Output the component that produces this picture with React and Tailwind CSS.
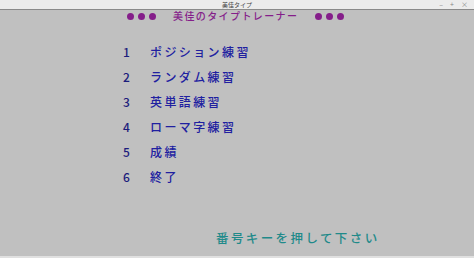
export default function App() {
  const items = [
    ['1', 'ポジション練習'],
    ['2', 'ランダム練習'],
    ['3', '英単語練習'],
    ['4', 'ローマ字練習'],
    ['5', '成績'],
    ['6', '終了'],
  ];
  const font = { fontFamily: '"Noto Sans CJK JP", "Noto Sans", sans-serif' };
  const Dots = () => (
    <div className="flex gap-[4px]">
      <span className="h-[7px] w-[7px] rounded-full bg-[#851e8a]" />
      <span className="h-[7px] w-[7px] rounded-full bg-[#851e8a]" />
      <span className="h-[7px] w-[7px] rounded-full bg-[#851e8a]" />
    </div>
  );

  return (
    <div className="flex h-[258px] w-[474px] flex-col bg-[#c0c0c0]" style={font}>
      {/* title bar */}
      <div className="relative flex h-[10px] items-center justify-center border-b border-[#8a8a8a] bg-[#ececec]">
        <span className="text-[6px] leading-none text-[#444]">美佳タイプ</span>
        <div className="absolute right-[6px] top-0 flex h-full items-center gap-[7px] text-[7px] leading-none text-[#888]">
          <span>–</span>
          <span>+</span>
          <span>×</span>
        </div>
      </div>

      {/* header */}
      <div className="mt-[1px] flex h-[10px] items-center pl-[127px]">
        <Dots />
        <span className="ml-[17px] text-[10px] font-medium leading-none tracking-[1.4px] text-[#851e8a]">美佳のタイプトレーナー</span>
        <div className="ml-[17px]">
          <Dots />
        </div>
      </div>

      {/* menu */}
      <div className="mt-[22px] flex flex-col gap-[8px] pl-[123px]">
        {items.map(([n, label]) => (
          <div key={n} className="flex h-[17px] items-center">
            <span className="w-[27px] text-[12px] font-medium leading-none text-[#1c1c7c]">{n}</span>
            <span className="text-[12px] font-medium leading-none tracking-[2.4px] text-[#2020a0]">{label}</span>
          </div>
        ))}
      </div>

      {/* prompt */}
      <div className="mt-[47px] pl-[216px] text-[12.5px] font-medium leading-none tracking-[2.4px] text-[#1f8a8a]">番号キーを押して下さい</div>

      <div className="mt-auto h-[2px] bg-[#e0e0e0]" />
    </div>
  );
}
